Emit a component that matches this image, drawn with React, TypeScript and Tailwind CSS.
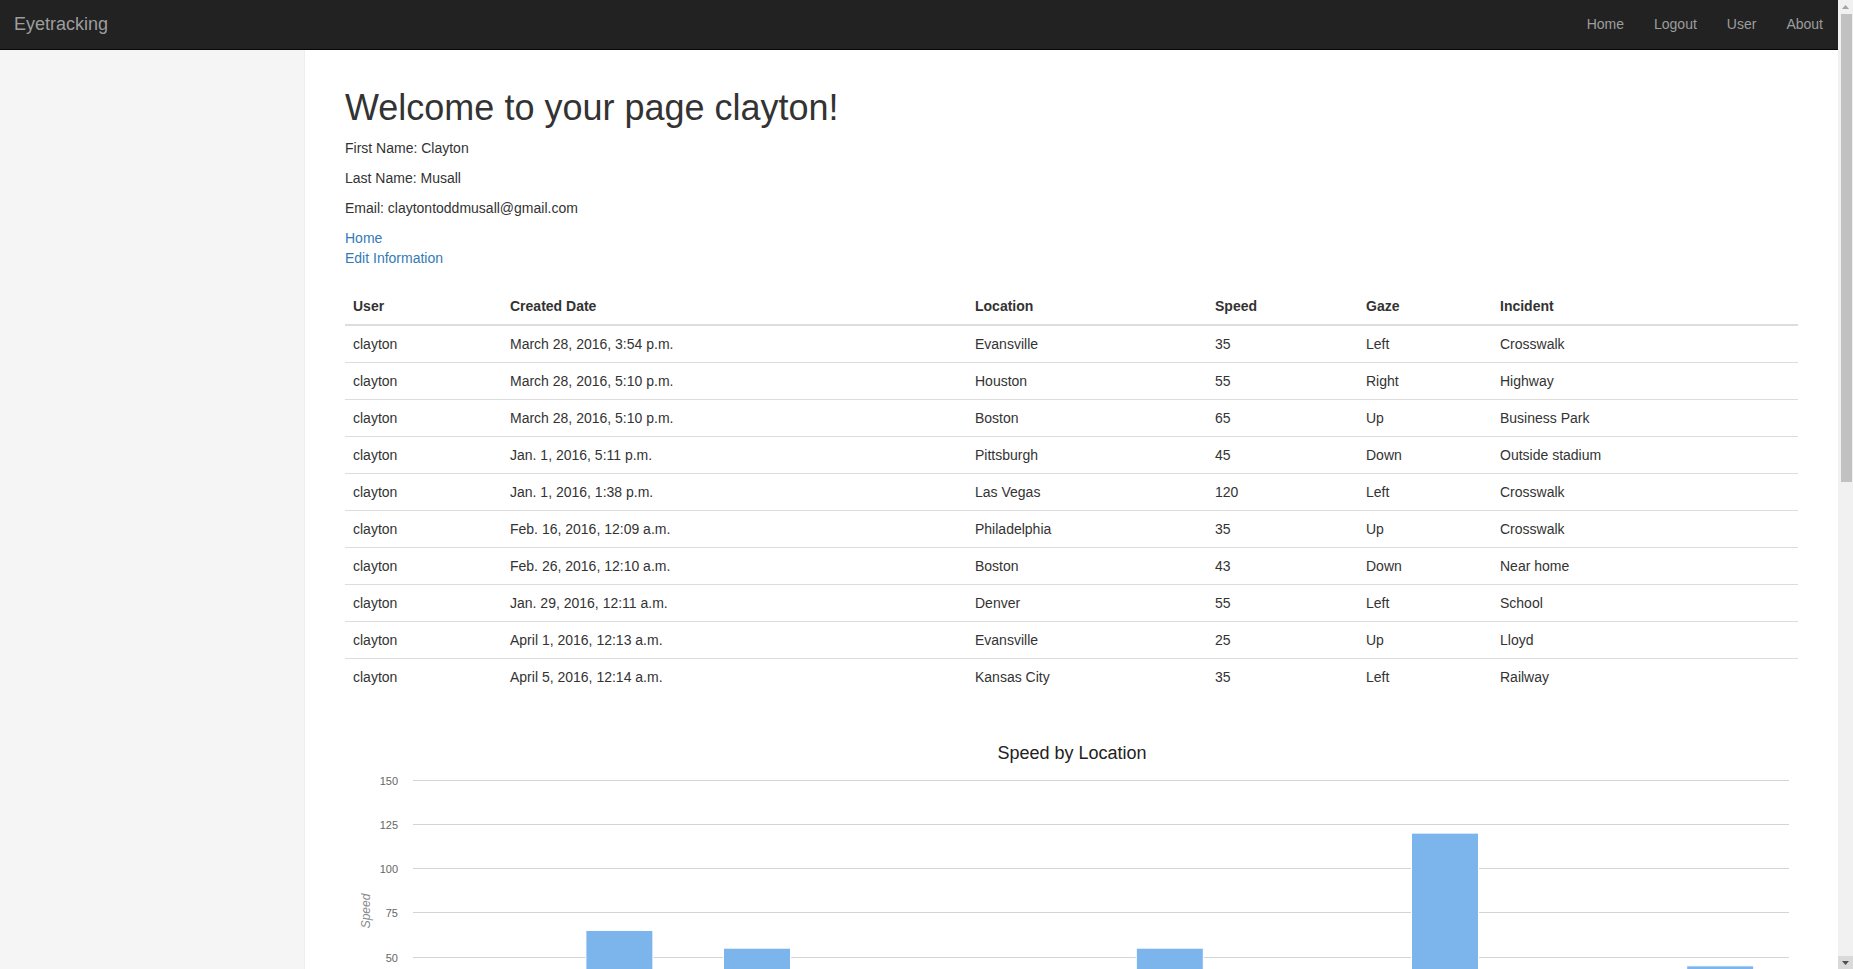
import React from "react";

type Row = {
  user: string;
  created: string;
  location: string;
  speed: number;
  gaze: string;
  incident: string;
};

const rows: Row[] = [
  { user: "clayton", created: "March 28, 2016, 3:54 p.m.", location: "Evansville", speed: 35, gaze: "Left", incident: "Crosswalk" },
  { user: "clayton", created: "March 28, 2016, 5:10 p.m.", location: "Houston", speed: 55, gaze: "Right", incident: "Highway" },
  { user: "clayton", created: "March 28, 2016, 5:10 p.m.", location: "Boston", speed: 65, gaze: "Up", incident: "Business Park" },
  { user: "clayton", created: "Jan. 1, 2016, 5:11 p.m.", location: "Pittsburgh", speed: 45, gaze: "Down", incident: "Outside stadium" },
  { user: "clayton", created: "Jan. 1, 2016, 1:38 p.m.", location: "Las Vegas", speed: 120, gaze: "Left", incident: "Crosswalk" },
  { user: "clayton", created: "Feb. 16, 2016, 12:09 a.m.", location: "Philadelphia", speed: 35, gaze: "Up", incident: "Crosswalk" },
  { user: "clayton", created: "Feb. 26, 2016, 12:10 a.m.", location: "Boston", speed: 43, gaze: "Down", incident: "Near home" },
  { user: "clayton", created: "Jan. 29, 2016, 12:11 a.m.", location: "Denver", speed: 55, gaze: "Left", incident: "School" },
  { user: "clayton", created: "April 1, 2016, 12:13 a.m.", location: "Evansville", speed: 25, gaze: "Up", incident: "Lloyd" },
  { user: "clayton", created: "April 5, 2016, 12:14 a.m.", location: "Kansas City", speed: 35, gaze: "Left", incident: "Railway" },
];

// order the bars show up in the chart
const chartData = [
  { location: "Evansville", speed: 35 },
  { location: "Boston", speed: 65 },
  { location: "Houston", speed: 55 },
  { location: "Philadelphia", speed: 35 },
  { location: "Evansville", speed: 25 },
  { location: "Denver", speed: 55 },
  { location: "Boston", speed: 43 },
  { location: "Las Vegas", speed: 120 },
  { location: "Kansas City", speed: 35 },
  { location: "Pittsburgh", speed: 45 },
];

const chartFont = "'Liberation Sans', Arial, sans-serif";

function SpeedChart() {
  const width = 1453;
  const height = 520;
  const left = 68;
  const right = 1444;
  const zeroY = 330.5;
  const unit = 44.25 / 25;
  const slot = (right - left) / chartData.length;
  const ticks = [0, 25, 50, 75, 100, 125, 150];

  return (
    <svg width={width} height={height} className="block">
      <text x={727} y={44} textAnchor="middle" fontSize={18} fill="#222" fontFamily={chartFont}>
        Speed by Location
      </text>
      {ticks.map((t) => {
        const y = Math.round(zeroY - t * unit - 0.5) + 0.5;
        return (
          <g key={t}>
            <line x1={left} x2={right} y1={y} y2={y} stroke={t === 0 ? "#333" : "#d4d4d4"} strokeWidth={1} />
            <text x={53} y={y + 4} textAnchor="end" fontSize={11} fill="#666" fontFamily={chartFont}>
              {t}
            </text>
          </g>
        );
      })}
      <text
        x={25}
        y={196}
        textAnchor="middle"
        fontSize={12}
        fill="#888"
        fontStyle="italic"
        transform="rotate(-90 25 196)"
        fontFamily={chartFont}
      >
        Speed
      </text>
      {chartData.map((d, i) => {
        const cx = left + slot * (i + 0.5);
        const h = d.speed * unit;
        return (
          <g key={i}>
            <rect x={cx - 33.5} y={zeroY - h} width={67} height={h} fill="#7cb5ec" stroke="#fff" strokeWidth={1} />
            <text x={cx} y={zeroY + 20} textAnchor="middle" fontSize={11} fill="#666" fontFamily={chartFont}>
              {d.location}
            </text>
          </g>
        );
      })}
      <text x={756} y={zeroY + 48} textAnchor="middle" fontSize={12} fill="#888" fontStyle="italic" fontFamily={chartFont}>
        Location
      </text>
    </svg>
  );
}

function Scrollbar() {
  return (
    <div className="w-[15px] shrink-0 h-screen bg-[#f1f1f1] flex flex-col">
      <div className="h-[14px] flex items-center justify-center">
        <svg width="7" height="4" viewBox="0 0 7 4">
          <path d="M0 4 L3.5 0 L7 4 Z" fill="#a3a3a3" />
        </svg>
      </div>
      <div className="h-[468px] ml-[3px] mr-[1px] bg-[#c1c1c1]" />
      <div className="flex-1" />
      <div className="h-[13px] bg-[#dadada] flex items-center justify-center">
        <svg width="7" height="4" viewBox="0 0 7 4">
          <path d="M0 0 L7 0 L3.5 4 Z" fill="#505050" />
        </svg>
      </div>
    </div>
  );
}

export default function App() {
  return (
    <div className="flex h-screen overflow-hidden bg-white font-['Liberation_Sans',Arial,sans-serif] text-[14px] leading-5 text-[#333]">
      <div className="flex-1 min-w-0">
        <nav className="h-[50px] bg-[#222] border-b border-[#080808] flex items-start justify-between">
          <a className="px-[14px] pt-[14px] text-[18px] leading-5 text-[#9d9d9d]">Eyetracking</a>
          <ul className="flex">
            {["Home", "Logout", "User", "About"].map((l) => (
              <li key={l}>
                <a className="block px-[15px] pt-[14px] pb-[15px] leading-5 text-[#9d9d9d]">{l}</a>
              </li>
            ))}
          </ul>
        </nav>

        <div className="flex min-h-[1900px]">
          <aside className="w-[305px] shrink-0 bg-[#f5f5f5] border-r border-[#eee]" />

          <main className="flex-1 min-w-0 px-10 pt-[18px] pb-10">
            <h1 className="mt-5 mb-[10px] text-[36px] leading-[1.1] font-normal text-[#333]">
              Welcome to your page clayton!
            </h1>
            <p className="mb-[10px]">First Name: Clayton</p>
            <p className="mb-[10px]">Last Name: Musall</p>
            <p className="mb-[10px]">Email: claytontoddmusall@gmail.com</p>
            <div>
              <a className="text-[#337ab7]">Home</a>
              <br />
              <a className="text-[#337ab7]">Edit Information</a>
            </div>

            <table className="mt-5 mb-5 w-full table-fixed border-collapse">
              <thead>
                <tr>
                  <th className="w-[157px] p-2 text-left font-bold border-b-2 border-[#ddd]">User</th>
                  <th className="w-[465px] p-2 text-left font-bold border-b-2 border-[#ddd]">Created Date</th>
                  <th className="w-[240px] p-2 text-left font-bold border-b-2 border-[#ddd]">Location</th>
                  <th className="w-[151px] p-2 text-left font-bold border-b-2 border-[#ddd]">Speed</th>
                  <th className="w-[134px] p-2 text-left font-bold border-b-2 border-[#ddd]">Gaze</th>
                  <th className="p-2 text-left font-bold border-b-2 border-[#ddd]">Incident</th>
                </tr>
              </thead>
              <tbody>
                {rows.map((r, i) => (
                  <tr key={i} className={i > 0 ? "border-t border-[#ddd]" : ""}>
                    <td className="p-2">{r.user}</td>
                    <td className="p-2">{r.created}</td>
                    <td className="p-2">{r.location}</td>
                    <td className="p-2">{r.speed}</td>
                    <td className="p-2">{r.gaze}</td>
                    <td className="p-2">{r.incident}</td>
                  </tr>
                ))}
              </tbody>
            </table>

            <SpeedChart />
          </main>
        </div>
      </div>
      <Scrollbar />
    </div>
  );
}
